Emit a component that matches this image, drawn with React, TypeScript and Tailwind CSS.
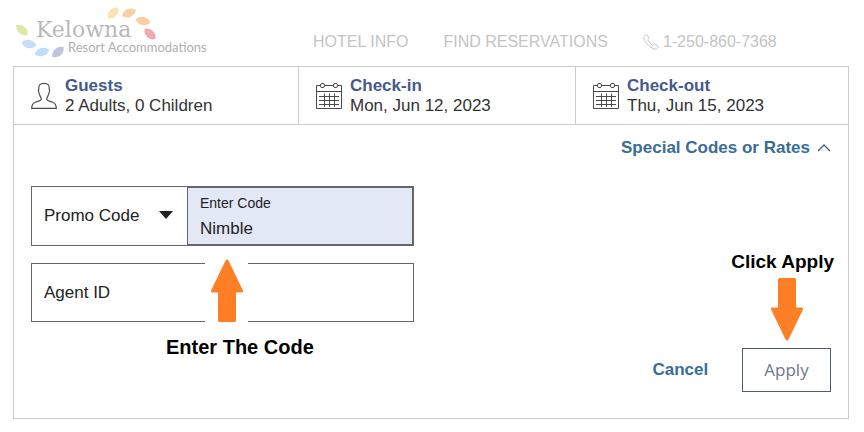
import React, { ReactNode, useState } from 'react'

const PETALS = [
  { x: 21, y: 30, angle: 32, color: '#dbe9a6' },
  { x: 28, y: 44, angle: 2, color: '#c3def6' },
  { x: 41, y: 52, angle: -24, color: '#c0ddfa' },
  { x: 57, y: 52, angle: -50, color: '#bfc5de' },
  { x: 112, y: 13, angle: -55, color: '#fae3b4' },
  { x: 128, y: 13, angle: -30, color: '#f8d0a6' },
  { x: 142, y: 21, angle: 4, color: '#f8cfa6' },
  { x: 149, y: 34, angle: 35, color: '#efabb2' },
]

function Logo() {
  return (
    <svg width="200" height="60" viewBox="12 4 200 60" role="img" aria-label="Kelowna Resort Accommodations">
      {PETALS.map(({ x, y, angle, color }) => (
        <path
          key={`${x}-${y}`}
          d="M-7.500 -1C-5 -4 -2 -4.500 1 -4C4 -3.500 6 -1.500 7.500 1C5 4 2 4.500 -1 4C-4 3.500 -6 1.500 -7.500 -1Z"
          fill={color}
          transform={`translate(${x} ${y}) rotate(${angle})`}
        />
      ))}
      <text x="35" y="37" fontSize="22" fill="#b9b9b9" fontFamily="'DejaVu Serif', serif">
        Kelowna
      </text>
      <text x="67" y="52" fontSize="13" fill="#b0b0b0" fontFamily="Lato, sans-serif">
        Resort Accommodations
      </text>
    </svg>
  )
}

function PhoneIcon() {
  return (
    <svg width="16" height="16" viewBox="0 0 16 16" fill="none" stroke="#c4c4c4" strokeLinejoin="round">
      <path d="M1 2.500L3 .8C3.500 .5 4 .6 4.300 1L6 3.800C6.300 4.300 6.100 4.700 5.700 5L4.800 5.800C5.500 7.800 7.700 10.200 9.900 11.200L10.900 10.200C11.300 9.900 11.700 9.900 12.100 10.100L14.800 11.900C15.300 12.200 15.300 12.700 15 13.100L13.400 15C10.500 16.500 -1 7.500 1 2.500Z" />
    </svg>
  )
}

function UserIcon() {
  return (
    <svg width="26" height="28" viewBox="0 0 26 28" fill="none" stroke="#4a4a4a" strokeWidth="1.200">
      <path d="M.7 26.300C.7 22 2.500 20.800 5 20C8 19 10.300 18.500 10.300 17C10.300 15 8 13.500 7.800 10C7.300 9 7.300 7.500 7.800 7C7.300 3 9.500 1.300 13 1.300C16.500 1.300 18.700 3 18.200 7C18.700 7.500 18.700 9 18.200 10C18 13.500 15.700 15 15.700 17C15.700 18.500 18 19 21 20C23.500 20.800 25.300 22 25.300 26.300Z" />
    </svg>
  )
}

function CalendarIcon() {
  return (
    <svg width="26" height="28" viewBox="0 0 26 28" fill="none" stroke="#4a4a4a">
      <path d="M4.500 3.500H.5V26.500H25.500V3.500H21.500M8.500 3.500H17.500M.5 9.500H25.500" />
      <rect x="4.500" y="1.500" width="4" height="4" rx="1.500" />
      <rect x="17.500" y="1.500" width="4" height="4" rx="1.500" />
      <path d="M3 14.500H23M3 18.500H23M3 22.500H23M8.500 11.500V25M13.500 11.500V25M18.500 11.500V25" />
    </svg>
  )
}

function Arrow({ className }: { className?: string }) {
  return (
    <svg width="32" height="63" viewBox="0 0 32 63" className={className}>
      <path
        d="M16 2L30.500 32H23.500V61.500H8.500V32H1.500Z"
        fill="#ff7f27"
        stroke="#ff7f27"
        strokeWidth="3"
        strokeLinejoin="round"
      />
    </svg>
  )
}

function Summary({ icon, title, value }: { icon: ReactNode; title: string; value: string }) {
  return (
    <button type="button" className="flex items-center gap-2 pt-[9px] pb-2 pl-[17px] text-left leading-5">
      {icon}
      <span>
        <span className="block font-bold text-[#475a8c]">{title}</span>
        <span className="block text-[#333]">{value}</span>
      </span>
    </button>
  )
}

export default function App() {
  const [code, setCode] = useState('Nimble')
  const [agent, setAgent] = useState('')

  return (
    <div className="px-[13px] pb-3 bg-white text-[17px] leading-5 font-['Liberation_Sans',Arial,sans-serif]">
      <header className="flex items-start h-[66px] pt-1">
        <Logo />
        <nav className="flex items-center gap-[35px] pt-7 pl-[100px] text-base leading-5 text-[#c4c4c4]">
          <a href="#hotel">HOTEL INFO</a>
          <a href="#reservations">FIND RESERVATIONS</a>
          <a href="#call" className="flex items-center gap-1">
            <PhoneIcon />
            1-250-860-7368
          </a>
        </nav>
      </header>

      <main className="mr-[2px] border border-[#ccc]">
        <div className="grid grid-cols-[285fr_277fr_272fr] divide-x divide-[#ccc] border-b border-[#ccc]">
          <Summary icon={<UserIcon />} title="Guests" value="2 Adults, 0 Children" />
          <Summary icon={<CalendarIcon />} title="Check-in" value="Mon, Jun 12, 2023" />
          <Summary icon={<CalendarIcon />} title="Check-out" value="Thu, Jun 15, 2023" />
        </div>

        <div className="flex justify-end pt-[13px] pr-[17px]">
          <button type="button" className="flex items-center gap-[7px] font-bold text-[#3a6d96]">
            Special Codes or Rates
            <svg width="14" height="8" viewBox="0 0 14 8" fill="none" stroke="#3f5f80" strokeWidth="1.300">
              <path d="M1 7L7 1L13 7" />
            </svg>
          </button>
        </div>

        <form className="flex justify-between pt-7 pb-[26px] pl-[17px] pr-[14px]" onSubmit={(e) => e.preventDefault()}>
          <div className="w-[383px] pb-[35px] text-[#222]">
            <div className="flex h-[60px]">
              <div className="relative w-[156px] border border-r-0 border-[#666]">
                <select aria-label="Promo Code" className="w-full h-full pl-3 appearance-none outline-none">
                  <option>Promo Code</option>
                </select>
                <svg width="14" height="8" viewBox="0 0 14 8" className="absolute right-[14px] top-6 pointer-events-none">
                  <path d="M0 0H14L7 8Z" fill="#222" />
                </svg>
              </div>
              <div className="flex flex-col flex-1 pt-[5px] pl-3 bg-[#e2e8f5] border-2 border-l border-[#666]">
                <label htmlFor="code" className="text-sm leading-5">
                  Enter Code
                </label>
                <input
                  id="code"
                  value={code}
                  onChange={(e) => setCode(e.target.value)}
                  className="w-full h-8 outline-none"
                />
              </div>
            </div>
            <div className="relative mt-[17px]">
              <input
                aria-label="Agent ID"
                placeholder="Agent ID"
                value={agent}
                onChange={(e) => setAgent(e.target.value)}
                className="block w-full h-[59px] px-3 border border-[#666] outline-none placeholder:text-[#222]"
              />
              <div className="absolute -top-1 left-[174px] w-[43px] pl-[6px] bg-white">
                <Arrow />
              </div>
            </div>
            <p className="pt-[15px] pl-[135px] text-xl leading-5 font-bold text-black">Enter The Code</p>
          </div>

          <div className="flex items-end gap-[23px]">
            <button type="button" className="h-11 font-bold text-[#3a6d96]">
              Cancel
            </button>
            <div className="flex flex-col items-end">
              <p className="text-[19px] leading-5 font-bold text-black">Click Apply</p>
              <div className="flex flex-col items-center gap-[7px] pt-[6px] pr-[3px]">
                <Arrow className="rotate-180" />
                <button
                  type="submit"
                  className="w-[89px] h-11 border border-[#4f5b78] text-[#6d778e] font-['Open_Sans',sans-serif]"
                >
                  Apply
                </button>
              </div>
            </div>
          </div>
        </form>
      </main>
    </div>
  )
}
